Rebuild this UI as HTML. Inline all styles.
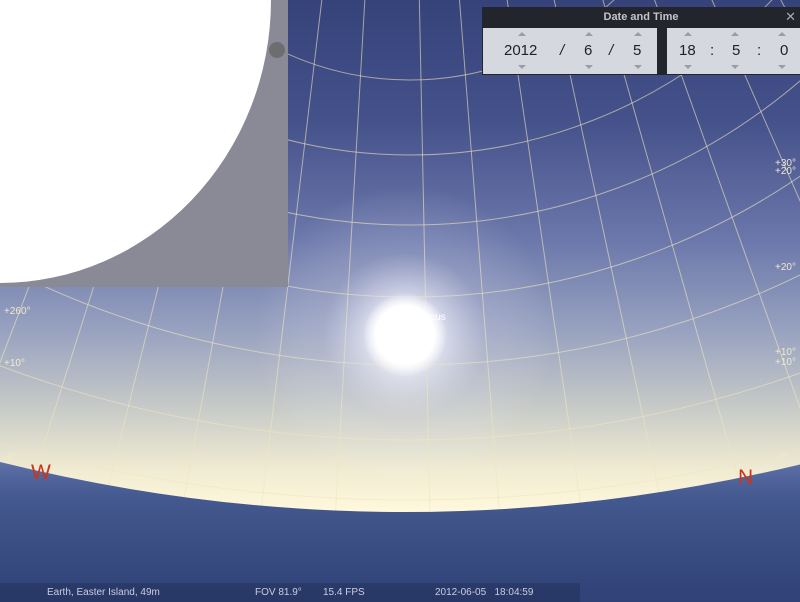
<!DOCTYPE html>
<html><head><meta charset="utf-8"><style>
body{margin:0;width:800px;height:602px;overflow:hidden;font-family:"Liberation Sans","DejaVu Sans",sans-serif;position:relative;background:#000}
.t{position:absolute;color:#f0ead0;font-size:10px}
.ar{position:absolute;width:0;height:0;border-left:4px solid transparent;border-right:4px solid transparent}
.up{border-bottom:4px solid #9a9ca6}.dn{border-top:4px solid #9a9ca6}
</style></head><body>
<svg width="800" height="602" style="position:absolute;left:0;top:0">
<defs>
<linearGradient id="sky" x1="0" y1="0" x2="0" y2="1">
<stop offset="0" stop-color="#36427a"/>
<stop offset="0.2" stop-color="#45518a"/>
<stop offset="0.4" stop-color="#6c78ab"/>
<stop offset="0.55" stop-color="#98a2c0"/>
<stop offset="0.68" stop-color="#c8cbc8"/>
<stop offset="0.78" stop-color="#f0ebd2"/>
<stop offset="0.85" stop-color="#fff8dc"/>
</linearGradient>
<radialGradient id="sun" cx="405" cy="335" r="150" gradientUnits="userSpaceOnUse">
<stop offset="0" stop-color="#fff" stop-opacity="1"/>
<stop offset="0.25" stop-color="#f4f4ff" stop-opacity="0.7"/>
<stop offset="0.55" stop-color="#dde" stop-opacity="0.2"/>
<stop offset="1" stop-color="#fff" stop-opacity="0"/>
</radialGradient>
<radialGradient id="core" cx="405" cy="335" r="42" gradientUnits="userSpaceOnUse">
<stop offset="0" stop-color="#fff"/>
<stop offset="0.7" stop-color="#fff"/>
<stop offset="1" stop-color="#fff" stop-opacity="0"/>
</radialGradient>
<linearGradient id="sea" x1="0" y1="0" x2="0" y2="1">
<stop offset="0" stop-color="#5d70a8"/>
<stop offset="0.25" stop-color="#44598f"/>
<stop offset="1" stop-color="#2f4176"/>
</linearGradient>
</defs>
<rect width="800" height="602" fill="url(#sky)"/>
<rect width="800" height="602" fill="url(#sun)"/>
<g fill="none" stroke="#efe6c0" stroke-opacity="0.6" stroke-width="1">
<circle cx="410" cy="-220" r="300"/>
<circle cx="410" cy="-345" r="500"/>
<circle cx="410" cy="-375" r="600"/>
<circle cx="410" cy="-393" r="690"/>
<circle cx="410" cy="-525" r="890"/>
<circle cx="410" cy="-730" r="1170"/>
<circle cx="410" cy="-1000" r="1500"/>
<path d="M405 -700 L-60 520 M405 -700 L20 520 M405 -700 L100 520 M405 -700 L180 520 M405 -700 L260 520 M405 -700 L335 520 M405 -700 L430 520 M405 -700 L500 520 M405 -700 L583 520 M405 -700 L665 520 M405 -700 L750 520 M405 -700 L840 520 M405 -700 L940 520 M405 -700 L1060 520"/>
</g>
<circle cx="405" cy="335" r="42" fill="url(#core)"/>
<path d="M0 462 Q405 562 810 462 L800 602 L0 602Z" fill="url(#sea)"/>
<rect x="0" y="583" width="580" height="19" fill="#1f2c55" opacity="0.45"/>
<rect x="0" y="0" width="288" height="287" fill="#8a8a96"/>
<ellipse cx="0" cy="0" rx="271" ry="283" fill="#fff"/>
<circle cx="277" cy="50" r="8" fill="#6d6d70"/>
</svg>
<div class="t" style="left:4px;top:306px">+260°</div>
<div class="t" style="left:4px;top:358px">+10°</div>
<div class="t" style="left:4px;top:452px">-0°</div>
<div class="t" style="left:775px;top:160px;line-height:8px">+30°<br>+20°</div>
<div class="t" style="left:775px;top:262px">+20°</div>
<div class="t" style="left:775px;top:348px;line-height:10px">+10°<br>+10°</div>
<div class="t" style="left:775px;top:452px">-0°</div>
<div class="t" style="left:418px;top:312px;color:#fff">Venus</div>
<div class="t" style="left:31px;top:461px;color:#cf3318;font-size:21px">W</div>
<div class="t" style="left:738px;top:466px;color:#cf3318;font-size:21px">N</div>
<div class="t" style="top:587px;left:47px;color:#ccd;">Earth, Easter Island, 49m</div>
<div class="t" style="top:587px;left:255px;color:#ccd;">FOV 81.9°</div>
<div class="t" style="top:587px;left:323px;color:#ccd;">15.4 FPS</div>
<div class="t" style="top:587px;left:435px;color:#ccd;">2012-06-05&nbsp;&nbsp;&nbsp;18:04:59</div>
<div style="position:absolute;left:482px;top:7px;width:318px;height:68px;background:#22252c">
<div style="color:#c4c4c8;font-size:11px;font-weight:bold;text-align:center;height:20px;line-height:20px">Date and Time</div>
<div style="position:absolute;right:4px;top:2px;color:#aaa;font-weight:bold;font-size:13px">✕</div>
<div style="position:absolute;left:1px;top:21px;width:174px;height:46px;background:#d6d8e0;font-size:15px;color:#222">
<span style="position:absolute;left:21px;top:14px">2012</span><span style="position:absolute;left:77px;top:14px;font-style:italic">/</span><span style="position:absolute;left:101px;top:14px">6</span><span style="position:absolute;left:126px;top:14px;font-style:italic">/</span><span style="position:absolute;left:150px;top:14px">5</span>
<div class="ar up" style="left:35px;top:4px"></div><div class="ar dn" style="left:35px;top:37px"></div>
<div class="ar up" style="left:102px;top:4px"></div><div class="ar dn" style="left:102px;top:37px"></div>
<div class="ar up" style="left:151px;top:4px"></div><div class="ar dn" style="left:151px;top:37px"></div>
</div>
<div style="position:absolute;left:185px;top:21px;width:133px;height:46px;background:#d6d8e0;font-size:15px;color:#222">
<span style="position:absolute;left:12px;top:14px">18</span><span style="position:absolute;left:43px;top:14px">:</span><span style="position:absolute;left:65px;top:14px">5</span><span style="position:absolute;left:90px;top:14px">:</span><span style="position:absolute;left:113px;top:14px">0</span>
<div class="ar up" style="left:17px;top:4px"></div><div class="ar dn" style="left:17px;top:37px"></div>
<div class="ar up" style="left:64px;top:4px"></div><div class="ar dn" style="left:64px;top:37px"></div>
<div class="ar up" style="left:111px;top:4px"></div><div class="ar dn" style="left:111px;top:37px"></div>
</div>
</div>
</body></html>
